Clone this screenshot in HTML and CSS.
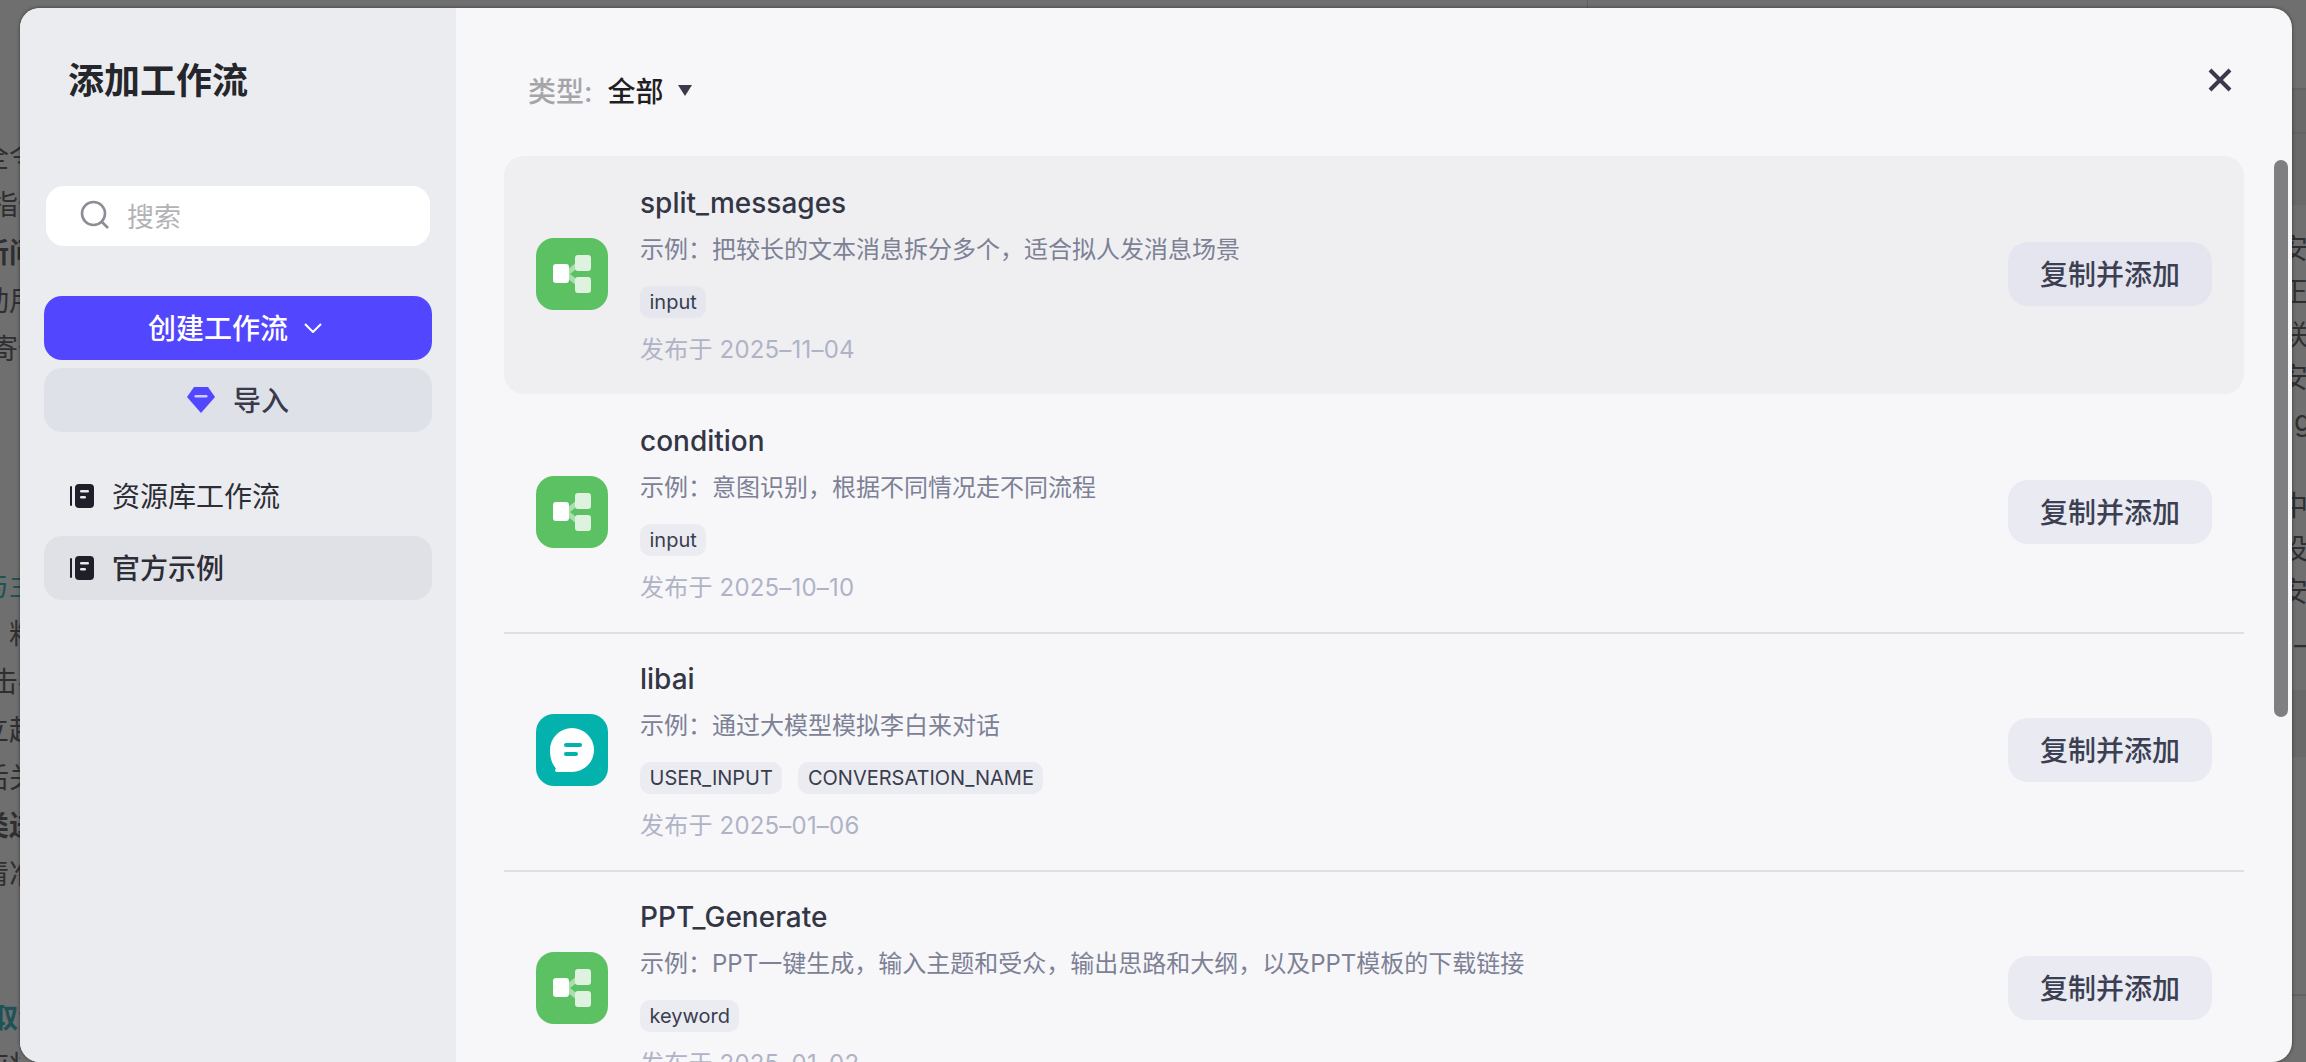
FILE: index.html
```html
<!DOCTYPE html>
<html lang="zh">
<head>
    <meta charset="UTF-8">
    <title>添加工作流</title>
    <link rel="stylesheet" href="styles.css">
</head>
<body>
    <div class="backdrop">
        <div class="bg-left">
            <p class="gap-154">全令</p>
            <p class="far">指何</p>
            <p class="bold">新问</p>
            <p>动用</p>
            <p class="far">寄何</p>
            <p class="teal gap-584">与主</p>
            <p>粘</p>
            <p class="far">击手</p>
            <p>立起</p>
            <p>后关</p>
            <p class="bold">类送</p>
            <p>清准</p>
            <p class="teal bold far gap-1018">取消</p>
            <p>应将</p>
        </div>
        <div class="bg-right">
            <p class="gap-r1">安</p>
            <p>正</p>
            <p>联</p>
            <p>安全</p>
            <p class="latin">g</p>
            <p class="gap-r2">中文</p>
            <p>设计</p>
            <p>安全</p>
            <p class="latin">_上</p>
        </div>
    </div>

    <div class="modal">
        <aside class="sidebar">
            <h1 class="sidebar-title">添加工作流</h1>
            <div class="search">
                <svg class="search-icon" viewBox="0 0 30 30" width="30" height="30">
                    <circle cx="13.5" cy="13.5" r="11.5" fill="none" stroke="#8d8d96" stroke-width="2.6"/>
                    <path d="M22 22l6 6" stroke="#8d8d96" stroke-width="2.6" fill="none"/>
                </svg>
                <span class="search-text">搜索</span>
            </div>
            <button class="btn-create">
                <span>创建工作流</span>
                <svg viewBox="0 0 18 10" width="18" height="10">
                    <path d="M1 1l8 8 8-8" fill="none" stroke="#fff" stroke-width="2"/>
                </svg>
            </button>
            <button class="btn-import">
                <svg viewBox="0 0 28 26" width="28" height="26">
                    <path d="M7 0h14l7 10-14 16L0 10z" fill="#5247ff"/>
                    <rect x="7.5" y="8" width="13" height="2.6" rx="1.3" fill="#cfcdfb"/>
                </svg>
                <span>导入</span>
            </button>
            <nav class="nav">
                <a class="nav-item">
                    <svg class="nav-icon" viewBox="0 0 24 24" width="24" height="24">
                        <rect x="0" y="2" width="2" height="20" rx="1" fill="#1f1f29"/>
                        <rect x="5" y="0" width="19" height="24" rx="4" fill="#1f1f29"/>
                        <rect x="10" y="6" width="9" height="2.6" rx="1.3" fill="#e8e8ee"/>
                        <rect x="10" y="12" width="6" height="2.6" rx="1.3" fill="#e8e8ee"/>
                    </svg>
                    <span>资源库工作流</span>
                </a>
                <a class="nav-item active">
                    <svg class="nav-icon" viewBox="0 0 24 24" width="24" height="24">
                        <rect x="0" y="2" width="2" height="20" rx="1" fill="#1f1f29"/>
                        <rect x="5" y="0" width="19" height="24" rx="4" fill="#1f1f29"/>
                        <rect x="10" y="6" width="9" height="2.6" rx="1.3" fill="#e8e8ee"/>
                        <rect x="10" y="12" width="6" height="2.6" rx="1.3" fill="#e8e8ee"/>
                    </svg>
                    <span>官方示例</span>
                </a>
            </nav>
        </aside>

        <main class="content">
            <div class="toolbar">
                <span class="filter-label">类型:</span>
                <span class="filter-value">全部</span>
                <span class="filter-arrow"></span>
                <svg class="close" viewBox="0 0 24 24" width="24" height="24">
                    <path d="M2 2l20 20M22 2L2 22" stroke="#3a3a4a" stroke-width="4" fill="none"/>
                </svg>
            </div>

            <div class="list">
                <div class="card hover">
                    <div class="app-icon green">
                        <svg viewBox="0 0 72 72" width="72" height="72">
                            <path d="M30 36L45 24M30 36L45 48" stroke="#a9dfad" stroke-width="5" fill="none"/>
                            <rect x="39" y="17" width="16" height="16" rx="3" fill="#def2df"/>
                            <rect x="39" y="39" width="16" height="16" rx="3" fill="#def2df"/>
                            <rect x="17" y="26" width="16" height="19" rx="3" fill="#fff"/>
                        </svg>
                    </div>
                    <div class="card-body">
                        <div class="card-title">split_messages</div>
                        <div class="card-desc">示例：把较长的文本消息拆分多个，适合拟人发消息场景</div>
                        <div class="tags"><span class="tag">input</span></div>
                        <div class="card-date">发布于 2025–11–04</div>
                    </div>
                    <button class="btn-add">复制并添加</button>
                </div>

                <div class="card">
                    <div class="app-icon green">
                        <svg viewBox="0 0 72 72" width="72" height="72">
                            <path d="M30 36L45 24M30 36L45 48" stroke="#a9dfad" stroke-width="5" fill="none"/>
                            <rect x="39" y="17" width="16" height="16" rx="3" fill="#def2df"/>
                            <rect x="39" y="39" width="16" height="16" rx="3" fill="#def2df"/>
                            <rect x="17" y="26" width="16" height="19" rx="3" fill="#fff"/>
                        </svg>
                    </div>
                    <div class="card-body">
                        <div class="card-title">condition</div>
                        <div class="card-desc">示例：意图识别，根据不同情况走不同流程</div>
                        <div class="tags"><span class="tag">input</span></div>
                        <div class="card-date">发布于 2025–10–10</div>
                    </div>
                    <button class="btn-add">复制并添加</button>
                </div>

                <div class="card">
                    <div class="app-icon teal-bg">
                        <svg viewBox="0 0 72 72" width="72" height="72">
                            <path d="M36 14a22 22 0 1 1 0 44H21c-2 0-2.500-2.500-1-3.500-4-4.500-6-10-6-18.500a22 22 0 0 1 22-22z" fill="#fff"/>
                            <rect x="28" y="29" width="18" height="4" rx="2" fill="#04b2ad"/>
                            <rect x="28" y="38" width="14" height="4" rx="2" fill="#04b2ad"/>
                        </svg>
                    </div>
                    <div class="card-body">
                        <div class="card-title">libai</div>
                        <div class="card-desc">示例：通过大模型模拟李白来对话</div>
                        <div class="tags"><span class="tag">USER_INPUT</span><span class="tag">CONVERSATION_NAME</span></div>
                        <div class="card-date">发布于 2025–01–06</div>
                    </div>
                    <button class="btn-add">复制并添加</button>
                </div>

                <div class="card">
                    <div class="app-icon green">
                        <svg viewBox="0 0 72 72" width="72" height="72">
                            <path d="M30 36L45 24M30 36L45 48" stroke="#a9dfad" stroke-width="5" fill="none"/>
                            <rect x="39" y="17" width="16" height="16" rx="3" fill="#def2df"/>
                            <rect x="39" y="39" width="16" height="16" rx="3" fill="#def2df"/>
                            <rect x="17" y="26" width="16" height="19" rx="3" fill="#fff"/>
                        </svg>
                    </div>
                    <div class="card-body">
                        <div class="card-title">PPT_Generate</div>
                        <div class="card-desc">示例：PPT一键生成，输入主题和受众，输出思路和大纲，以及PPT模板的下载链接</div>
                        <div class="tags"><span class="tag">keyword</span></div>
                        <div class="card-date">发布于 2025–01–02</div>
                    </div>
                    <button class="btn-add">复制并添加</button>
                </div>
            </div>

            <div class="scrollbar"></div>
        </main>
    </div>
</body>
</html>
```

FILE: styles.css
```css
* {
    box-sizing: border-box;
}
html, body {
    margin: 0;
    padding: 0;
    height: 100%;
    overflow: hidden;
}
body {
    font-family: Inter, "Noto Sans CJK SC", sans-serif;
    background-color: #6f6f70;
}
button {
    font-family: inherit;
    border: none;
}

/* dimmed page behind the modal */
.backdrop {
    display: flex;
    justify-content: space-between;
    height: 1062px;
    overflow: hidden;
    color: #2f2f31;
    font-size: 28px;
    line-height: 48px;
    background-repeat: no-repeat;
    background-image: linear-gradient(#5f5f60, #5f5f60);
    background-size: 1px 8px;
    background-position: 1587px 0;
}
.backdrop p {
    margin: 0;
    white-space: nowrap;
}
.bg-left {
    width: 20px;
    overflow: hidden;
    direction: rtl;
}
.bg-left p {
    margin-right: -17px;
}
.bg-left p.far {
    margin-right: -26px;
}
.bg-right {
    width: 26px;
    overflow: hidden;
    line-height: 43px;
    background-repeat: no-repeat;
    background-image:
        linear-gradient(#636364, #636364),
        linear-gradient(#636364, #636364),
        linear-gradient(#69696a, #69696a),
        linear-gradient(#69696a, #69696a),
        linear-gradient(#636364, #636364);
    background-size: 100% 2px, 100% 2px, 100% 117px, 100% 67px, 100% 2px;
    background-position: 0 88px, 0 132px, 0 88px, 0 690px, 0 994px;
}
.bg-right p.latin {
    padding-left: 14px;
}
.gap-154 { margin-top: 133px !important; }
.gap-584 { margin-top: 189px !important; }
.gap-1018 { margin-top: 96px !important; }
.gap-r1 { margin-top: 228px !important; }
.gap-r2 { margin-top: 42px !important; }
.bold { font-weight: 600; }
.teal { color: #1d5257; }

.modal {
    position: absolute;
    left: 20px;
    top: 8px;
    width: 2272px;
    height: 1054px;
    display: flex;
    border-radius: 20px;
    overflow: hidden;
    background: #f7f7fa;
    box-shadow: 0 0 3px 1px rgba(0, 0, 0, 0.3);
}

.sidebar {
    width: 436px;
    flex-shrink: 0;
    background: #ebecf0;
    padding: 0 24px;
    display: flex;
    flex-direction: column;
}
.sidebar-title {
    margin: 49px 0 3px 24px;
    font-size: 36px;
    line-height: 48px;
    font-weight: 600;
    color: #25262b;
}
.search {
    margin: 78px 2px 0;
    height: 60px;
    background: #fff;
    border-radius: 18px;
    display: flex;
    align-items: center;
    padding: 0 0 2px 34px;
    gap: 17px;
}
.search-text {
    font-size: 27px;
    color: #b3b3b5;
}
.btn-create {
    margin-top: 50px;
    height: 64px;
    background: #5247ff;
    color: #fff;
    border-radius: 18px;
    font-size: 28px;
    font-weight: 500;
    display: flex;
    align-items: center;
    justify-content: center;
    padding: 0 6px 0 0;
    gap: 16px;
}
.btn-create span,
.btn-import span,
.nav-item span {
    padding-bottom: 3px;
}
.btn-import {
    margin-top: 8px;
    height: 64px;
    background: #dfe1e9;
    color: #3a3b4a;
    border-radius: 18px;
    font-size: 28px;
    font-weight: 500;
    display: flex;
    align-items: center;
    justify-content: center;
    gap: 18px;
}
.nav {
    margin-top: 32px;
    display: flex;
    flex-direction: column;
    gap: 8px;
}
.nav-item {
    height: 64px;
    border-radius: 18px;
    display: flex;
    align-items: center;
    gap: 18px;
    padding-left: 26px;
    font-size: 28px;
    color: #2c2d35;
}
.nav-item.active {
    background: #e0e1e6;
    font-weight: 500;
}

.content {
    position: relative;
    flex: 1;
    min-width: 0;
    padding: 0 48px;
}
.toolbar {
    height: 148px;
    display: flex;
    align-items: center;
    padding: 16px 24px 0;
    font-size: 28px;
}
.filter-label {
    color: #a5a5a9;
    font-weight: 500;
}
.filter-value {
    margin-left: 15px;
    color: #1f1f23;
    font-weight: 500;
}
.filter-arrow {
    margin-left: 14px;
    border-left: 7px solid transparent;
    border-right: 7px solid transparent;
    border-top: 11px solid #3a3a4a;
}
.close {
    position: absolute;
    right: 60px;
    top: 60px;
}

.card {
    height: 238px;
    display: flex;
    align-items: center;
    padding: 0 32px 2px;
    position: relative;
}
.card.hover {
    background: #efeff2;
    border-radius: 20px;
}
.card + .card + .card::before {
    content: "";
    position: absolute;
    left: 0;
    right: 0;
    top: 0;
    height: 2px;
    background: #dfdfe2;
}
.app-icon {
    width: 72px;
    height: 72px;
    border-radius: 18px;
    flex-shrink: 0;
    overflow: hidden;
}
.app-icon svg {
    display: block;
}
.green { background: #5cc163; }
.teal-bg { background: #04b2ad; }
.card-body {
    flex: 1;
    min-width: 0;
    align-self: flex-start;
    margin: 30px 0 0 32px;
}
.card-title {
    font-size: 28px;
    line-height: 34px;
    font-weight: 500;
    color: #333645;
}
.card-desc {
    margin-top: 14px;
    font-size: 24px;
    line-height: 32px;
    color: #7d8195;
}
.tags {
    margin-top: 20px;
    display: flex;
    gap: 16px;
}
.tag {
    height: 32px;
    line-height: 32px;
    padding: 0 9.5px;
    border-radius: 10px;
    font-size: 20px;
    color: #3a3d4d;
    background: #ebecf2;
}
.hover .tag {
    background: #e5e6ee;
}
.card-date {
    margin-top: 16px;
    font-size: 24px;
    line-height: 32px;
    letter-spacing: 0.2px;
    color: #b0b3c6;
}
.btn-add {
    width: 204px;
    height: 64px;
    border-radius: 20px;
    background: #e9eaf2;
    color: #3c3f52;
    font-size: 28px;
    font-weight: 500;
    padding: 0 0 3px;
}
.hover .btn-add {
    background: #e4e5ee;
}

.scrollbar {
    position: absolute;
    right: 4px;
    top: 152px;
    width: 14px;
    height: 557px;
    border-radius: 7px;
    background: #7f7f81;
}
```
